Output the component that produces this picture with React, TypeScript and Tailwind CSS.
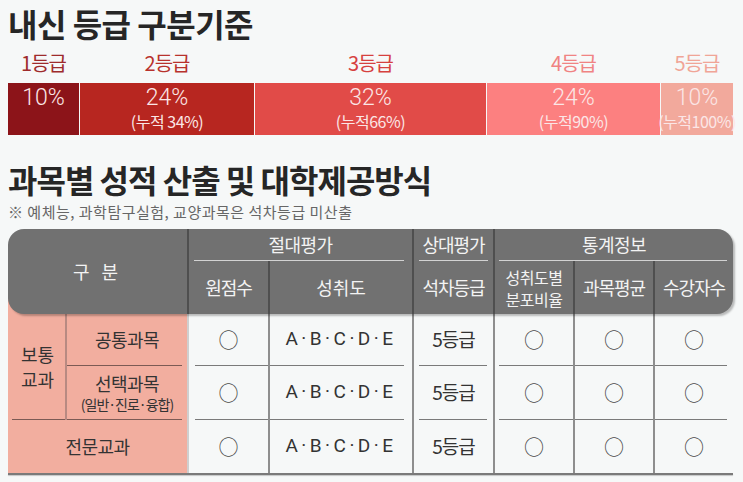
const GRADES = [
  { label: "1등급", pct: "10%", cum: "", w: "w-[71px]", bg: "bg-[#8c1419]", fg: "text-[#9e2b2c]" },
  { label: "2등급", pct: "24%", cum: "(누적 34%)", w: "w-[174px]", bg: "bg-[#b72620]", fg: "text-[#b8322d]" },
  { label: "3등급", pct: "32%", cum: "(누적66%)", w: "w-[231px]", bg: "bg-[#e14b48]", fg: "text-[#d6413f]" },
  { label: "4등급", pct: "24%", cum: "(누적90%)", w: "w-[173px]", bg: "bg-[#fc8080]", fg: "text-[#f08383]" },
  { label: "5등급", pct: "10%", cum: "(누적100%)", w: "w-[72px]", bg: "bg-[#f2a99c]", fg: "text-[#f0a597]" },
];

const ROWS = [
  { line: true },
  { line: true },
  { line: false },
];

function Circle() {
  return <span className="text-[20px] leading-none text-[#4a4a4a]">○</span>;
}

function DataCells({ line }: { line: boolean }) {
  const cells = [
    { content: <Circle />, border: "border-[#cfcfcf]", lineCls: "ml-[6px]" },
    {
      content: (
        <span className="font-['Roboto',sans-serif] text-[19px] tracking-[3.5px] text-[#333]">A·B·C·D·E</span>
      ),
      border: "border-[#8e8e8e]",
      lineCls: "mr-[8px]",
    },
    {
      content: <span className="text-[19px] tracking-[-1px] text-[#333]">5등급</span>,
      border: "border-[#8e8e8e]",
      lineCls: "ml-[5px] mr-[6px]",
    },
    { content: <Circle />, border: "border-[#8e8e8e]", lineCls: "ml-[4px]" },
    { content: <Circle />, border: "border-[#8e8e8e]", lineCls: "" },
    { content: <Circle />, border: "border-[#8e8e8e]", lineCls: "mr-[6px]" },
  ];
  return (
    <>
      {cells.map((c, i) => (
        <div key={i} className={`flex flex-col border-l-2 ${c.border}`}>
          <div className="flex flex-1 items-center justify-center">{c.content}</div>
          {line && <div className={`h-px bg-[#7a7a7a] ${c.lineCls}`} />}
        </div>
      ))}
    </>
  );
}

export default function App() {
  return (
    <div className="flex h-[482px] w-[743px] flex-col bg-[#f6f8f8] px-[8px] font-['Noto_Sans_CJK_KR',sans-serif] text-[#222]">
      {/* Title 1 */}
      <div className="flex h-[46px] items-center">
        <h1 className="text-[32px] font-bold leading-none tracking-[-0.5px] text-[#262626]">내신 등급 구분기준</h1>
      </div>

      {/* Grade labels */}
      <div className="flex h-[37px] gap-px">
        {GRADES.map((g) => (
          <div key={g.label} className={`${g.w} flex items-center justify-center pb-[4px] text-[20px] tracking-[-1px] ${g.fg}`}>
            {g.label}
          </div>
        ))}
      </div>

      {/* Bar */}
      <div className="flex h-[52px] gap-px">
        {GRADES.map((g) => (
          <div key={g.label} className={`${g.w} ${g.bg} flex flex-col items-center pt-[1px] text-[#fbe6e6]`}>
            <span className="font-['Roboto',sans-serif] text-[23px] font-light leading-[27px]">{g.pct}</span>
            {g.cum && (
              <span className="whitespace-nowrap text-[16px] leading-[20px] tracking-[-0.5px]">{g.cum}</span>
            )}
          </div>
        ))}
      </div>

      {/* Title 2 */}
      <div className="flex h-[65px] items-end pb-[5px]">
        <h2 className="text-[32px] font-bold leading-none tracking-[-1px] text-[#262626]">
          과목별 성적 산출 및 대학제공방식
        </h2>
      </div>

      {/* Note */}
      <div className="flex h-[25px] items-center">
        <p className="text-[15px] tracking-[0.5px] text-[#666]">※ 예체능, 과학탐구실험, 교양과목은 석차등급 미산출</p>
      </div>

      {/* Table */}
      <div className="mt-[4px] w-[725px]">
        {/* Header */}
        <div className="relative z-10 bg-[image:linear-gradient(#f2ae9f,#f2ae9f)] bg-[length:179px_20px] bg-[position:left_bottom] bg-no-repeat">
          <div className="grid h-[85px] grid-cols-[179px_81px_144px_81px_80px_80px_80px] grid-rows-[32px_53px] rounded-[16px] bg-[#717171] text-[18px] text-[#f3f3f3] shadow-[2px_2px_2px_rgba(0,0,0,0.25)]">
            <div className="row-span-2 flex items-center justify-center tracking-[4px]">구 분</div>
            <div className="col-span-2 flex flex-col border-l-2 border-[#4f4f4f]">
              <div className="flex flex-1 items-center justify-center tracking-[-0.5px]">절대평가</div>
              <div className="ml-[5px] mr-[8px] h-px bg-[#d2d2d2]" />
            </div>
            <div className="flex flex-col border-l-2 border-[#4f4f4f]">
              <div className="flex flex-1 items-center justify-center tracking-[-1px]">상대평가</div>
              <div className="mx-[5px] h-px bg-[#d2d2d2]" />
            </div>
            <div className="col-span-3 flex flex-col border-l-2 border-[#4f4f4f]">
              <div className="flex flex-1 items-center justify-center tracking-[-0.5px]">통계정보</div>
              <div className="ml-[4px] mr-[6px] h-px bg-[#d2d2d2]" />
            </div>
            <div className="flex items-center justify-center border-l-2 border-[#4f4f4f] tracking-[-1px]">원점수</div>
            <div className="flex items-center justify-center border-l-2 border-[#4f4f4f]">성취도</div>
            <div className="flex items-center justify-center border-l-2 border-[#4f4f4f] tracking-[-1px]">석차등급</div>
            <div className="flex flex-col items-center justify-center border-l-2 border-[#4f4f4f] text-[16px] leading-[22px] tracking-[-0.5px]">
              <span>성취도별</span>
              <span>분포비율</span>
            </div>
            <div className="flex items-center justify-center border-l-2 border-[#4f4f4f] tracking-[-1px]">과목평균</div>
            <div className="flex items-center justify-center border-l-2 border-[#4f4f4f] tracking-[-1px]">수강자수</div>
          </div>
        </div>

        {/* Body */}
        <div className="grid grid-cols-[59px_120px_81px_144px_81px_80px_80px_80px] grid-rows-[52px_54px_53px] text-[#333]">
          <div className="row-span-2 flex flex-col border-r-2 border-[#b88a82] bg-[#f2ae9f]">
            <div className="flex flex-1 flex-col items-center justify-center pl-[2px] text-[18px] leading-[25px]">
              <span>보통</span>
              <span>교과</span>
            </div>
            <div className="ml-[4px] h-px bg-[#7c5a54]" />
          </div>
          <div className="flex flex-col bg-[#f2ae9f]">
            <div className="flex flex-1 items-center justify-center text-[18px] tracking-[-0.5px]">공통과목</div>
            <div className="mr-[5px] h-px bg-[#7c5a54]" />
          </div>
          <DataCells line={ROWS[0].line} />

          <div className="flex flex-col bg-[#f2ae9f]">
            <div className="flex flex-1 flex-col items-center justify-center">
              <span className="text-[18px] leading-[23px] tracking-[-0.5px]">선택과목</span>
              <span className="text-[14px] leading-[19px] tracking-[-1px]">(일반·진로·융합)</span>
            </div>
            <div className="mr-[5px] h-px bg-[#7c5a54]" />
          </div>
          <DataCells line={ROWS[1].line} />

          <div className="col-span-2 flex items-center justify-center bg-[#f2ae9f] text-[18px] tracking-[-0.5px]">
            전문교과
          </div>
          <DataCells line={ROWS[2].line} />
        </div>
        <div className="h-[2px] bg-[#7a7a7a] shadow-[0_1px_1px_rgba(0,0,0,0.2)]" />
      </div>
    </div>
  );
}
